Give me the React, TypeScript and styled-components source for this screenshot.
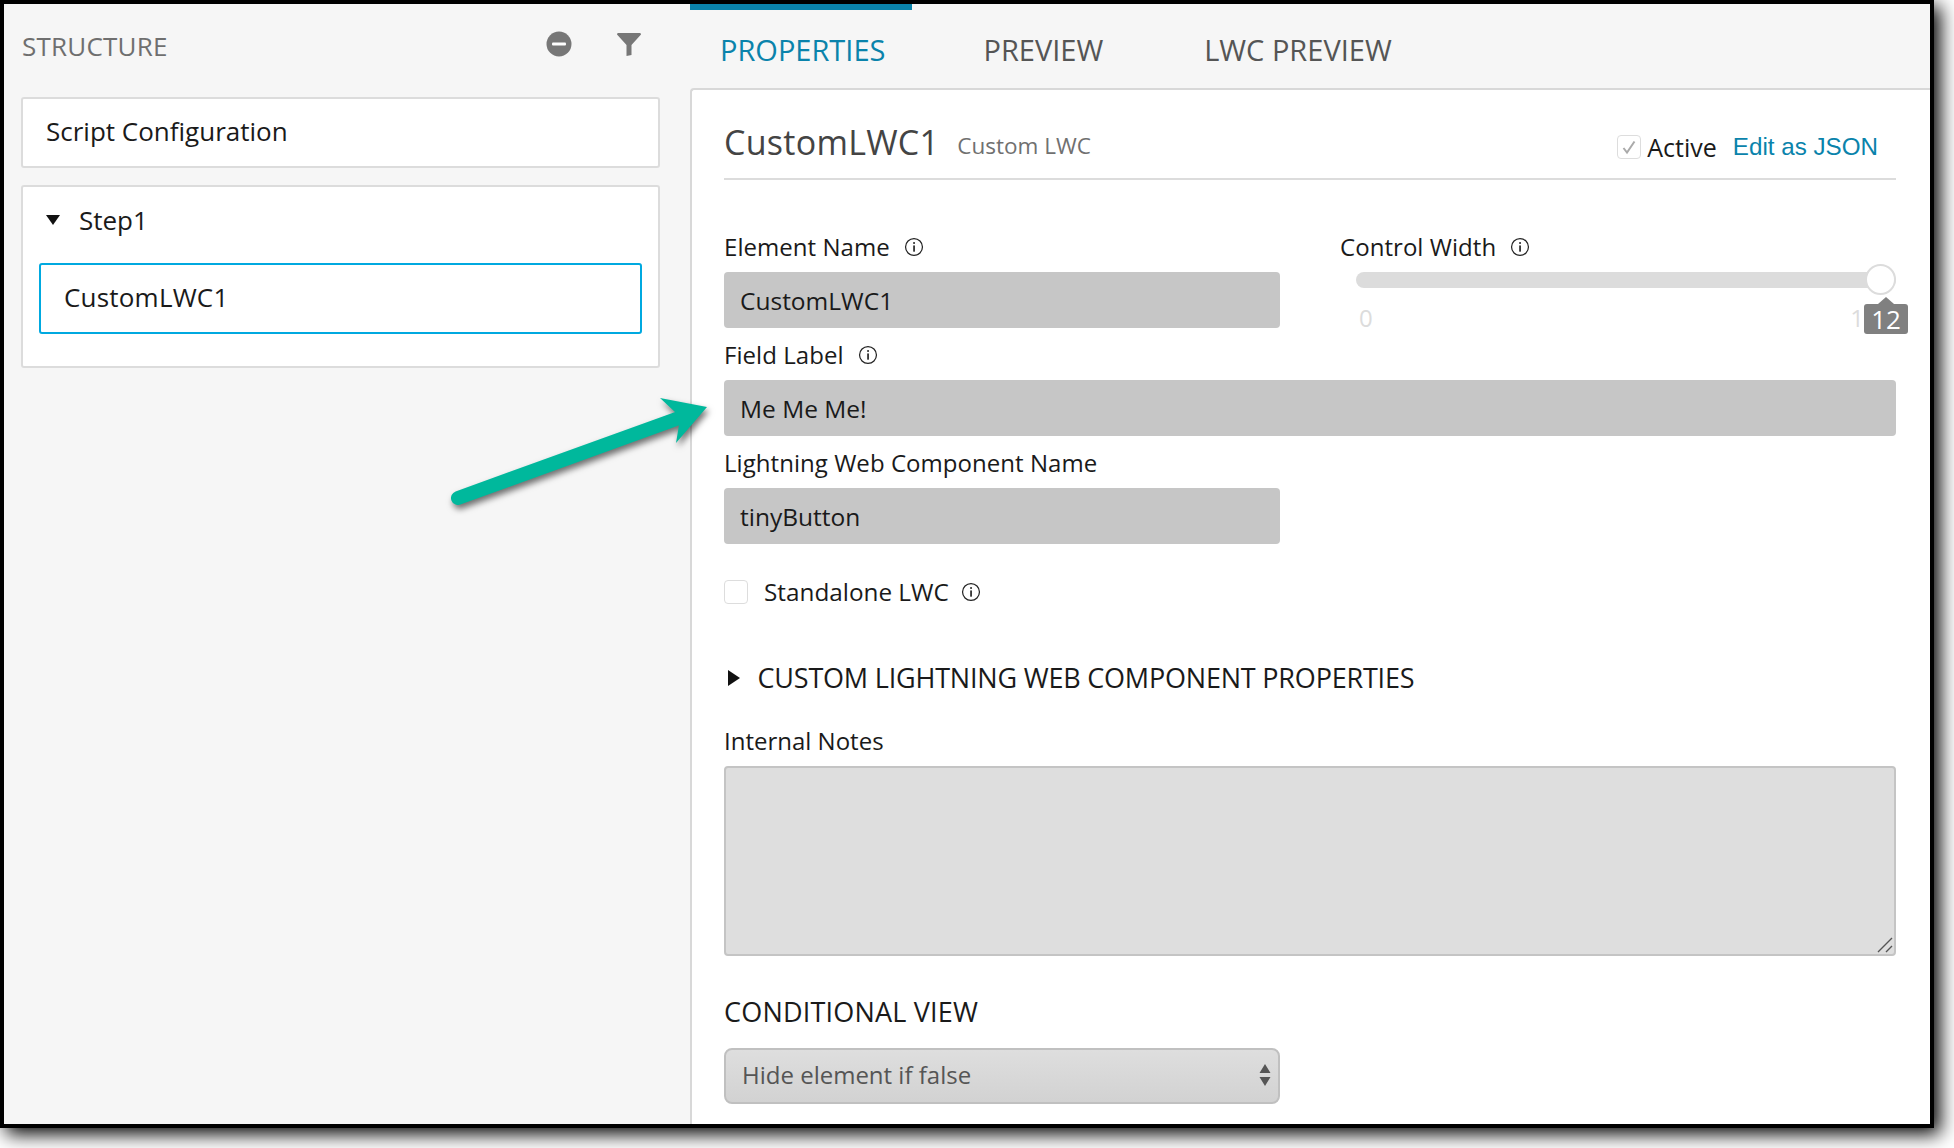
import React from 'react';
import styled, { createGlobalStyle } from 'styled-components';

const FONT = `'Open Sans', 'Noto Sans', sans-serif`;

const GlobalStyle = createGlobalStyle`
  html, body {
    margin: 0;
    padding: 0;
    background: #fff;
  }
  * {
    box-sizing: border-box;
  }
`;

function InfoIcon() {
  return (
    <InfoSvg viewBox="0 0 18 18">
      <circle cx="9" cy="9" r="7.6" fill="none" stroke="#222" strokeWidth="1.1" />
      <rect x="8.3" y="7.6" width="1.5" height="5.6" fill="#222" />
      <rect x="8.3" y="4.6" width="1.5" height="1.6" fill="#222" />
    </InfoSvg>
  );
}

function InfoLabel({ text }: { text: string }) {
  return (
    <FieldLabel>
      {text}
      <InfoIcon />
    </FieldLabel>
  );
}

export default function App() {
  return (
    <Page>
      <GlobalStyle />
      <Frame>
        <Sidebar>
          <SidebarHead>
            <SidebarTitle>STRUCTURE</SidebarTitle>
            <HeadIcons>
              <svg width="26" height="26" viewBox="0 0 26 26">
                <circle cx="13" cy="13" r="12.5" fill="#777" />
                <rect x="6" y="11.5" width="14" height="3" rx="1" fill="#fff" />
              </svg>
              <svg width="26" height="26" viewBox="0 0 26 26">
                <path d="M2 2 H24 Q25 2 25 3.5 L15.5 14 V24 L10.5 25 V14 L1 3.5 Q1 2 2 2 Z" fill="#777" />
              </svg>
            </HeadIcons>
          </SidebarHead>
          <ScriptCard>Script Configuration</ScriptCard>
          <StepCard>
            <StepRow>
              <svg width="14" height="10" viewBox="0 0 14 10">
                <path d="M0 0 H14 L7 10 Z" fill="#111" />
              </svg>
              Step1
            </StepRow>
            <ElementItem>CustomLWC1</ElementItem>
          </StepCard>
        </Sidebar>
        <Main>
          <Tabs>
            <Tab $active>PROPERTIES</Tab>
            <Tab>PREVIEW</Tab>
            <Tab>LWC PREVIEW</Tab>
          </Tabs>
          <Panel>
            <PanelHead>
              <PanelTitle>CustomLWC1</PanelTitle>
              <PanelType>Custom LWC</PanelType>
              <ActiveBox>
                <svg width="16" height="16" viewBox="0 0 16 16">
                  <path d="M2.5 9 L6 13.5 L13.5 2.5" fill="none" stroke="#aaa" strokeWidth="2" />
                </svg>
              </ActiveBox>
              <ActiveText>Active</ActiveText>
              <JsonLink>Edit as JSON</JsonLink>
            </PanelHead>
            <TopRow>
              <div>
                <InfoLabel text="Element Name" />
                <TextInput>CustomLWC1</TextInput>
              </div>
              <div>
                <InfoLabel text="Control Width" />
                <Slider>
                  <SliderTrack />
                  <SliderThumb />
                  <SliderScale>
                    <span>0</span>
                    <span>1</span>
                  </SliderScale>
                  <SliderBubble>12</SliderBubble>
                </Slider>
              </div>
            </TopRow>
            <InfoLabel text="Field Label" />
            <TextInput $wide>Me Me Me!</TextInput>
            <FieldLabel>Lightning Web Component Name</FieldLabel>
            <TextInput>tinyButton</TextInput>
            <CheckRow>
              <EmptyBox />
              <CheckText>Standalone LWC</CheckText>
              <InfoIcon />
            </CheckRow>
            <SectionRow>
              <svg width="12" height="16" viewBox="0 0 12 16">
                <path d="M0 0 L12 8 L0 16 Z" fill="#111" />
              </svg>
              CUSTOM LIGHTNING WEB COMPONENT PROPERTIES
            </SectionRow>
            <NotesLabel>Internal Notes</NotesLabel>
            <NotesArea>
              <svg width="16" height="16" viewBox="0 0 16 16">
                <path d="M1 15 L15 1 M9 15 L15 9" stroke="#555" strokeWidth="1.4" />
              </svg>
            </NotesArea>
            <ViewLabel>CONDITIONAL VIEW</ViewLabel>
            <SelectBox>
              Hide element if false
              <svg width="12" height="24" viewBox="0 0 12 24">
                <path d="M6 1 L11.5 10 H0.5 Z M0.5 14 H11.5 L6 23 Z" fill="#555" />
              </svg>
            </SelectBox>
          </Panel>
        </Main>
        <ArrowSvg viewBox="0 0 300 140" width="300" height="140">
          <path d="M31 118 L252 38" stroke="#00b89c" strokeWidth="14" strokeLinecap="round" />
          <path d="M233 18 L280 27 L249 63 L252 45 L248 32 Z" fill="#00b89c" />
        </ArrowSvg>
      </Frame>
    </Page>
  );
}

const Page = styled.div`
  width: 1954px;
  height: 1148px;
  overflow: hidden;
  background: #fff;
`;

const Frame = styled.div`
  position: relative;
  display: flex;
  width: 1934px;
  height: 1128px;
  border: 4px solid #000;
  background: #f6f6f6;
  box-shadow: 6px 6px 18px #000;
  font-family: ${FONT};
  color: #1a1a1a;
`;

const Sidebar = styled.aside`
  flex: 0 0 686px;
  padding: 0 30px 0 17px;
`;

const SidebarHead = styled.div`
  display: flex;
  align-items: center;
  justify-content: space-between;
  height: 93px;
  padding: 0 18px 0 1px;
`;

const SidebarTitle = styled.div`
  margin-top: -10px;
  font-size: 26px;
  letter-spacing: 0.2px;
  color: #6f6f6f;
`;

const HeadIcons = styled.div`
  display: flex;
  gap: 44px;
  margin-top: -14px;
`;

const ScriptCard = styled.div`
  display: flex;
  align-items: center;
  height: 71px;
  padding: 0 0 4px 23px;
  border: 2px solid #dcdcdc;
  border-radius: 3px;
  background: #fff;
  font-size: 26px;
`;

const StepCard = styled.div`
  height: 183px;
  margin-top: 17px;
  padding: 0 16px;
  border: 2px solid #dcdcdc;
  border-radius: 3px;
  background: #fff;
`;

const StepRow = styled.div`
  display: flex;
  align-items: center;
  gap: 19px;
  height: 66px;
  margin-bottom: 10px;
  padding-left: 7px;
  font-size: 26px;
`;

const ElementItem = styled.div`
  display: flex;
  align-items: center;
  height: 71px;
  padding: 0 0 3px 23px;
  border: 2px solid #00a9e0;
  border-radius: 3px;
  font-size: 26px;
  letter-spacing: 0.2px;
`;

const Main = styled.main`
  flex: 1;
  display: flex;
  flex-direction: column;
  min-width: 0;
`;

const Tabs = styled.nav`
  display: flex;
  gap: 41px;
  height: 84px;
`;

const Tab = styled.div<{ $active?: boolean }>`
  display: flex;
  align-items: center;
  height: 84px;
  padding: 1px ${({ $active }) => ($active ? '27px' : '30px')} 0 30px;
  border-top: 6px solid ${({ $active }) => ($active ? '#0a83ab' : 'transparent')};
  font-size: 29px;
  color: ${({ $active }) => ($active ? '#0a83ab' : '#555')};
`;

const Panel = styled.section`
  flex: 1;
  padding: 0 34px 0 32px;
  background: #fff;
  border-top: 2px solid #d8d8d8;
  border-left: 2px solid #d8d8d8;
  border-top-left-radius: 4px;
`;

const PanelHead = styled.header`
  display: flex;
  align-items: center;
  height: 90px;
  padding-top: 16px;
  border-bottom: 2px solid #dcdcdc;
`;

const PanelTitle = styled.h1`
  margin: 0;
  font-size: 34px;
  font-weight: 400;
  letter-spacing: 0.27px;
  color: #444;
`;

const PanelType = styled.span`
  margin-left: 18px;
  margin-top: 6px;
  font-size: 22.5px;
  color: #707070;
`;

const ActiveBox = styled.span`
  display: flex;
  align-items: center;
  justify-content: center;
  width: 24px;
  height: 24px;
  margin-left: auto;
  margin-top: 10px;
  border: 1.5px solid #ddd;
  border-radius: 4px;
`;

const ActiveText = styled.span`
  margin-left: 6px;
  margin-top: 10px;
  font-size: 25px;
`;

const JsonLink = styled.a`
  margin: 10px 18px 0 16px;
  font-family: 'Liberation Sans', Arial, sans-serif;
  font-size: 24.2px;
  color: #0a83ab;
`;

const TopRow = styled.div`
  display: grid;
  grid-template-columns: 556px 1fr;
  column-gap: 60px;
  margin-top: 39.5px;
`;

const FieldLabel = styled.label`
  display: flex;
  align-items: center;
  gap: 14px;
  height: 52px;
  padding-top: 2px;
  font-size: 24px;
  letter-spacing: 0.05px;
`;

const InfoSvg = styled.svg`
  flex: none;
  width: 20px;
  height: 20px;
`;

const TextInput = styled.div<{ $wide?: boolean }>`
  display: flex;
  align-items: center;
  width: ${({ $wide }) => ($wide ? '100%' : '556px')};
  height: 56px;
  padding: 2px 0 0 16px;
  border-radius: 4px;
  background: #c6c6c6;
  font-size: 24.5px;
`;

const Slider = styled.div`
  position: relative;
  height: 56px;
`;

const SliderTrack = styled.div`
  height: 16px;
  margin-left: 16px;
  border-radius: 8px;
  background: #dcdcdc;
`;

const SliderThumb = styled.div`
  position: absolute;
  top: -8px;
  right: 0;
  width: 31px;
  height: 31px;
  border: 2px solid #dcdcdc;
  border-radius: 50%;
  background: #fff;
`;

const SliderScale = styled.div`
  display: flex;
  justify-content: space-between;
  margin: 13px 32px 0 19px;
  font-size: 24px;
  color: #dcdcdc;
`;

const SliderBubble = styled.div`
  position: absolute;
  top: 32px;
  right: -12px;
  width: 44px;
  height: 30px;
  border-radius: 3px;
  background: #808080;
  color: #fff;
  font-size: 26px;
  line-height: 30px;
  text-align: center;
  &::before {
    content: '';
    position: absolute;
    top: -7px;
    left: 14px;
    border-style: solid;
    border-width: 0 8px 7px;
    border-color: transparent transparent #808080;
  }
`;

const CheckRow = styled.div`
  display: flex;
  align-items: center;
  height: 24px;
  margin-top: 36px;
`;

const EmptyBox = styled.span`
  width: 24px;
  height: 24px;
  border: 1.5px solid #ddd;
  border-radius: 4px;
`;

const CheckText = styled.span`
  margin: 0 12px 0 16px;
  font-size: 24.3px;
`;

const SectionRow = styled.div`
  display: flex;
  align-items: center;
  gap: 17.5px;
  height: 36px;
  margin-top: 56px;
  padding-left: 4px;
  font-size: 27px;
  letter-spacing: -0.2px;
`;

const NotesLabel = styled.label`
  display: block;
  height: 32px;
  margin-top: 29px;
  font-size: 24px;
  line-height: 32px;
`;

const NotesArea = styled.div`
  display: flex;
  align-items: flex-end;
  justify-content: flex-end;
  height: 190px;
  margin-top: 9px;
  padding: 0 1px 1px 0;
  border: 2px solid #c4c4c4;
  border-radius: 4px;
  background: #dedede;
`;

const ViewLabel = styled.div`
  height: 36px;
  margin-top: 38px;
  font-size: 27px;
  line-height: 36px;
  letter-spacing: 0.2px;
`;

const SelectBox = styled.div`
  display: flex;
  align-items: center;
  justify-content: space-between;
  width: 556px;
  height: 56px;
  margin-top: 18px;
  padding: 0 7px 2px 16px;
  border: 2px solid #c0c0c0;
  border-radius: 8px;
  background: linear-gradient(#dedede, #d2d2d2);
  font-size: 24px;
  color: #555;
`;

const ArrowSvg = styled.svg`
  position: absolute;
  left: 423px;
  top: 376px;
  filter: drop-shadow(2px 4px 3px rgba(0, 0, 0, 0.55));
`;
